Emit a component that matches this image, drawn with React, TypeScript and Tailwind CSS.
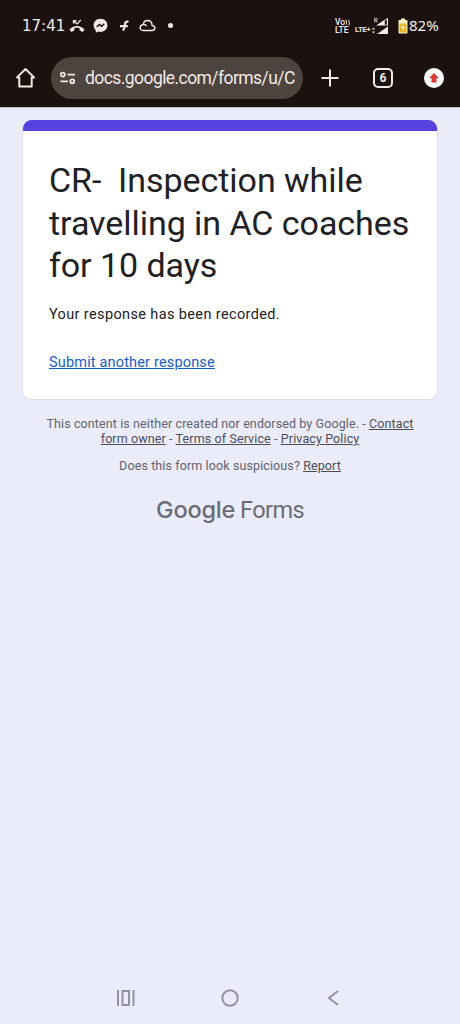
import React from "react";

function StatusBar() {
  return (
    <div className="flex h-[51px] items-center pl-[22px] pr-[21px] text-[#f3ece9]">
      <span className="w-[44px] whitespace-nowrap pt-[2px] font-['DejaVu_Sans',sans-serif] text-[15px] leading-none">17:41</span>
      <svg className="ml-[3px]" width="16" height="16" viewBox="0 0 16 16">
        <path d="M.4 11.800C4.400 6.800 11.600 6.800 15.600 11.800l-2.100 2.200-2.900-1.700V10.300C9 9.700 7 9.700 5.400 10.300v2l-2.900 1.700z" fill="currentColor" />
        <path d="M4.500 5.500V2.700h3M4.800 3 8 5.900l3.800-3.900" fill="none" stroke="currentColor" strokeWidth="1.300" />
      </svg>
      <svg className="ml-[8px]" width="15" height="16" viewBox="0 0 15 16">
        <path d="M7.500.7C3.500.7.600 3.500.600 7.300c0 2.100.8 3.800 2.200 5v2.500l2.400-1.200c.7.200 1.500.3 2.300.3 4 0 6.900-2.800 6.900-6.600S11.500.7 7.500.7z" fill="currentColor" />
        <path d="M3.800 9.100 6.400 6.500l2.200 1.800 2.700-2.500" fill="none" stroke="#1b120f" strokeWidth="1.400" />
      </svg>
      <svg className="ml-[11px]" width="11" height="12" viewBox="0 0 11 12">
        <path d="M9.500 1.800C7.200 1.200 6.400 2.100 6 4C5.700 7 5.200 9 4 10.600M1 6.200h7.800" fill="none" stroke="currentColor" strokeWidth="2.200" />
      </svg>
      <svg className="ml-[9px]" width="17" height="13" viewBox="0 0 17 13">
        <path d="M4.300 11.500H13c3.900 0 3.700-4.800.2-4.900C13 3.500 10.900 1.500 8.500 1.500S4.500 3.300 4.400 5.600C.1 5.900 0 11.500 4.300 11.500zM4.400 5.600c1.400-.2 2.600.6 3.200 1.500" fill="none" stroke="currentColor" strokeWidth="1.400" />
      </svg>
      <span className="ml-[12px] h-[5px] w-[5px] rounded-full bg-current" />
      <div className="ml-auto flex items-center">
        <span className="w-[20px] whitespace-nowrap pt-px font-[Roboto,sans-serif] text-[8.500px] font-medium leading-[8px]">
          <span className="flex h-[8px] items-center">
            Vo
            <svg width="6" height="7" viewBox="0 0 6 7">
              <path d="M.8.8q1.500 2.500.2 5M3.300.8q1.800 2.500.8 5.500" fill="none" stroke="currentColor" strokeWidth="1" />
            </svg>
          </span>
          <span className="block">LTE</span>
        </span>
        <span className="mt-[9px] w-[16px] whitespace-nowrap font-['Liberation_Sans',sans-serif] text-[7px] font-bold leading-[8px] tracking-[-0.4px]">LTE+</span>
        <svg width="18" height="18" viewBox="0 0 18 18">
          <path d="M5 8.500 17 .8V8.500zM6 17 17 9.500V17z" fill="currentColor" />
          <path d="M13.800 3.700v4h2V2.300z" fill="#1b120f" />
          <path d="M3.700 5.500V1.200h2q1 1.100 0 2.200h-2m1.300 0 1.200 2" fill="none" stroke="currentColor" strokeWidth=".8" />
          <path d="M2.500 10.500 4 12.600H1zM2.500 16.500 4 14.400H1z" fill="currentColor" />
        </svg>
        <svg className="ml-[9px]" width="10" height="16" viewBox="0 0 10 16">
          <path d="M3 .5h4V2h1.500q1 0 1 1v11.500q0 1-1 1h-7q-1 0-1-1V3q0-1 1-1H3z" fill="#fff3c8" />
          <path d="M1.500 5.500h7v9h-7z" fill="#e4b62e" />
          <path d="M5.500 6 3 10h2l-.5 3.500L7 9.200H5z" fill="#fff8d9" />
        </svg>
        <span className="ml-[1px] w-[30px] whitespace-nowrap font-['Noto_Sans',sans-serif] text-[15px] leading-none">82%</span>
      </div>
    </div>
  );
}

function BrowserBar() {
  return (
    <div className="flex h-[54px] items-center text-[#f3e9e5]">
      <svg className="ml-[15px]" width="21" height="22" viewBox="0 0 21 22">
        <path d="M10.500 2 2 10.400h2.300v9h12.400v-9H19z" fill="none" stroke="currentColor" strokeWidth="2" strokeLinejoin="round" />
      </svg>
      <div className="ml-[15px] flex h-[42px] w-[252px] items-center rounded-full bg-[#4d4440] pl-[8px]">
        <svg className="shrink-0" width="17" height="14" viewBox="0 0 17 14" fill="none" stroke="currentColor" strokeWidth="1.700">
          <circle cx="3.800" cy="3.600" r="2" />
          <circle cx="13.300" cy="10.300" r="2" />
          <path d="M8.500 3.600h7.500M1.500 10.300h7.500" />
        </svg>
        <span className="ml-[9px] whitespace-nowrap pt-px font-[Roboto,sans-serif] text-[17.500px] leading-none tracking-[-0.57px]">docs.google.com/forms/u/C</span>
      </div>
      <svg className="ml-[18px]" width="18" height="18" viewBox="0 0 18 18">
        <path d="M9 .5v17M.5 9h17" stroke="currentColor" strokeWidth="2" />
      </svg>
      <div className="ml-[34px] flex h-[20px] w-[20px] items-center justify-center rounded-[5px] border-2 border-current font-[Roboto,sans-serif] text-[12px] font-bold leading-none">6</div>
      <div className="ml-[31px] flex h-[20px] w-[20px] items-center justify-center rounded-full bg-white">
        <svg width="10" height="10" viewBox="0 0 10 10">
          <path d="M5 0 10 5H7.500v4.500h-5V5H0z" fill="#d93b32" />
        </svg>
      </div>
    </div>
  );
}

function ConfirmationCard() {
  return (
    <main className="mx-[22px] mt-[12px] h-[280px] overflow-hidden rounded-[9px] border border-t-0 border-[#dcdbea] bg-white">
      <div className="-mx-px h-[11px] bg-[#5642df]" />
      <div className="pl-[26px] pt-[28px] text-[#202124]">
        <h1 className="whitespace-pre text-[34px] leading-[42.500px] tracking-[-0.05px]">{"CR-  Inspection while\ntravelling in AC coaches\nfor 10 days"}</h1>
        <p className="mt-[17px] text-[14.500px] leading-[22px] tracking-[0.37px]">Your response has been recorded.</p>
        <a className="mt-[26px] block w-fit text-[14.500px] leading-[22px] tracking-[0.17px] text-[#1a5cc4] underline">Submit another response</a>
      </div>
    </main>
  );
}

function Footer() {
  return (
    <footer className="mt-[16px] text-center text-[12.500px] leading-[15px] tracking-[0.11px] text-[#62636d]">
      <p>
        This content is neither created nor endorsed by Google. - <a className="text-[#4c4d57] underline">Contact</a>
        <br />
        <a className="text-[#4c4d57] underline">form owner</a> - <a className="text-[#4c4d57] underline">Terms of Service</a> - <a className="text-[#4c4d57] underline">Privacy Policy</a>
      </p>
      <p className="mt-[12px]">
        Does this form look suspicious? <a className="text-[#4c4d57] underline">Report</a>
      </p>
      <div className="mt-[22px] flex items-baseline justify-center gap-[5px] leading-[30px] text-[#6a6d75]">
        <span className="font-[Inter,sans-serif] text-[23.500px] font-medium tracking-[-0.2px]">Google</span>
        <span className="text-[23.500px] tracking-[-0.6px]">Forms</span>
      </div>
    </footer>
  );
}

function NavigationBar() {
  return (
    <nav className="mt-auto flex h-[52px] items-center pl-[116px] text-[#92939c]">
      <svg width="20" height="18" viewBox="0 0 20 18" fill="none" stroke="currentColor" strokeWidth="2">
        <path d="M2 1v16M6.500 2h6.500v14H6.500zM17.500 1v16" />
      </svg>
      <svg className="ml-[84px]" width="20" height="20" viewBox="0 0 20 20">
        <circle cx="10" cy="10" r="7.700" fill="none" stroke="currentColor" strokeWidth="2" />
      </svg>
      <svg className="ml-[86px]" width="14" height="18" viewBox="0 0 14 18">
        <path d="M12 2 3 9l9 7" fill="none" stroke="currentColor" strokeWidth="2" />
      </svg>
    </nav>
  );
}

export default function App() {
  return (
    <div className="flex h-[1024px] w-[460px] flex-col overflow-hidden bg-[#ebecfa] font-[Roboto,sans-serif]">
      <header className="h-[108px] border-b border-[#c9b9c0] bg-[#1b120f]">
        <StatusBar />
        <BrowserBar />
      </header>
      <ConfirmationCard />
      <Footer />
      <NavigationBar />
    </div>
  );
}
